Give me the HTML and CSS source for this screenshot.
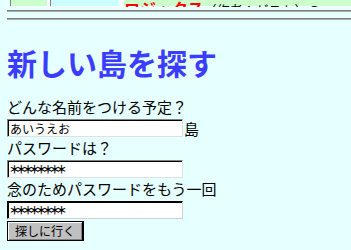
FILE: index.html
```html
<!DOCTYPE html>
<html lang="ja">
<head>
<meta charset="UTF-8" />
<meta name="viewport" content="width=device-width, initial-scale=1" />
<title>新しい島を探す</title>
<link rel="stylesheet" href="styles.css">
</head>
<body>

<!-- 上のメニュー（スクロールで切れている） -->
<div class="menu">
  <div class="celda verde primera"></div>
  <div class="celda celeste"></div>
  <div class="celda verde resto"><span class="logo">ロジックス</span><span class="autor">（作者：<u>ゲスト</u>）の</span></div>
</div>

<hr class="linea">
<hr class="linea">

<h1>新しい島を探す</h1>

<form class="nuevo">
  <div class="etiqueta">どんな名前をつける予定？</div>
  <div class="campo"><input class="caja" type="text" value="あいうえお"><span class="sufijo">島</span></div>
  <div class="etiqueta">パスワードは？</div>
  <div class="campo"><input class="caja clave" type="text" value="＊＊＊＊＊＊＊＊"></div>
  <div class="etiqueta">念のためパスワードをもう一回</div>
  <div class="campo"><input class="caja clave activa" type="text" value="＊＊＊＊＊＊＊＊"></div>
  <div class="campo"><button class="boton" type="button">探しに行く</button></div>
</form>

</body>
</html>
```

FILE: styles.css
```css
body {
  font-family: "Noto Sans CJK JP", "Noto Sans", sans-serif;
  background: #e6ffff;
  color: #000;
  margin: 0;
  font-size: 15px;
}
.menu {
  display: flex;
  height: 7px;
  margin-left: 10px;
  background: #fff;
  overflow: hidden;
}
.celda {
  height: 6px;
  border-left: 1px solid #808080;
}
.verde { background: #ccffcc; }
.celeste {
  background: #ccffff;
  width: 68px;
  margin-left: 3px;
}
.primera { width: 36px; }
.resto {
  flex: 1;
  margin-left: 5px;
  border-left: none;
  white-space: nowrap;
  line-height: 18px;
}
.resto span {
  display: inline-block;
  margin-top: -12px;
}
.logo {
  color: #ff0000;
  font-weight: 700;
  font-size: 16px;
}
.autor { font-size: 13px; }
.linea {
  margin: 3px 0 0 7px;
  height: 0;
  border: none;
  border-top: 1px solid #808080;
  border-bottom: 1px solid #a8a8a8;
}
.linea + .linea { margin-top: 6px; }
h1 {
  color: #3c3cff;
  font-size: 30px;
  font-weight: 700;
  line-height: 36px;
  margin: 24px 0 17px 7px;
}
.nuevo {
  display: flex;
  flex-direction: column;
  margin-left: 7px;
}
.etiqueta {
  line-height: 20px;
  height: 20px;
}
.campo {
  display: flex;
  align-items: center;
  height: 20px;
  margin: 1px 0 0;
}
.caja {
  box-sizing: border-box;
  width: 176px;
  height: 18px;
  padding: 0 2px;
  font-family: "Noto Sans CJK JP", sans-serif;
  font-size: 12px;
  color: #000;
  background: #fff;
  border: 1px solid;
  border-color: #808080 #e0e0e0 #e0e0e0 #808080;
  box-shadow: inset 1px 1px 0 #000;
  outline: none;
}
.caja.clave {
  font-size: 11px;
  font-weight: 700;
  letter-spacing: -4.3px;
  padding-left: 1px;
}
.caja.activa {
  border-color: #000 #d0d0d0 #d0d0d0 #000;
}
.sufijo { margin-left: 1px; }
.boton {
  box-sizing: border-box;
  width: 77px;
  height: 21px;
  padding: 0;
  font-family: "Noto Sans CJK JP", sans-serif;
  font-size: 12px;
  color: #000;
  background: #c0c0c0;
  border: 1px solid #000;
  border-right-width: 2px;
  border-bottom-width: 2px;
  box-shadow: inset 1px 1px 0 #fff, inset -1px -1px 0 #808080;
}
```
